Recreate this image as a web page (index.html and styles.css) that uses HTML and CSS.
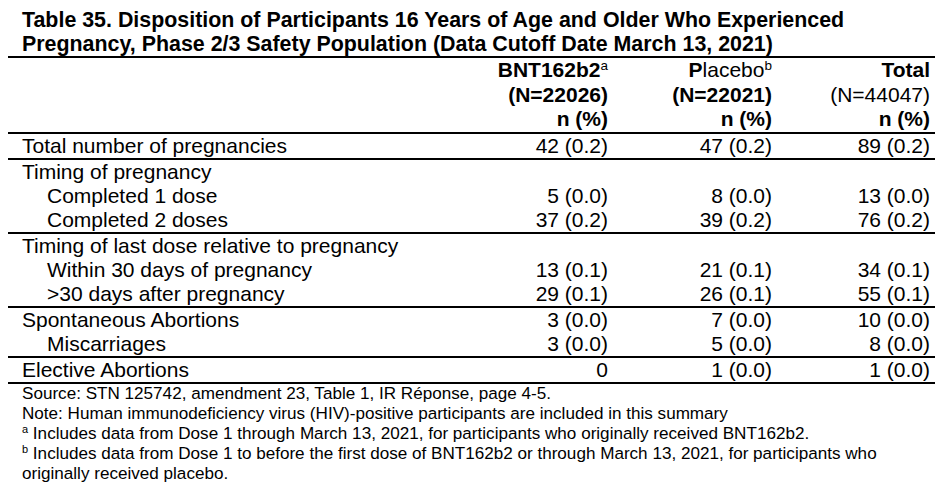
FILE: index.html
```html
<!DOCTYPE html>
<html lang="en">
<head>
<meta charset="utf-8">
<title>Table 35</title>
<link rel="stylesheet" href="styles.css">
</head>
<body>
<div class="page">
  <h1 class="title">Table 35. Disposition of Participants 16 Years of Age and Older Who Experienced Pregnancy, Phase 2/3 Safety Population (Data Cutoff Date March 13, 2021)</h1>
  <table class="disp">
    <colgroup>
      <col class="c-label">
      <col class="c-a">
      <col class="c-b">
      <col class="c-c">
    </colgroup>
    <thead>
      <tr>
        <th class="lab"></th>
        <th class="num">BNT162b2<sup class="hsup">a</sup><br>(N=22026)<br>n (%)</th>
        <th class="num">P<span class="reg">lacebo</span><sup class="hsup">b</sup><br>(N=22021)<br>n (%)</th>
        <th class="num">Total<br><span class="reg">(N=44047)</span><br>n (%)</th>
      </tr>
    </thead>
    <tbody>
      <tr><td class="lab">Total number of pregnancies</td><td class="num">42 (0.2)</td><td class="num">47 (0.2)</td><td class="num">89 (0.2)</td></tr>
    </tbody>
    <tbody>
      <tr><td class="lab">Timing of pregnancy</td><td class="num"></td><td class="num"></td><td class="num"></td></tr>
      <tr><td class="lab ind">Completed 1 dose</td><td class="num">5 (0.0)</td><td class="num">8 (0.0)</td><td class="num">13 (0.0)</td></tr>
      <tr><td class="lab ind">Completed 2 doses</td><td class="num">37 (0.2)</td><td class="num">39 (0.2)</td><td class="num">76 (0.2)</td></tr>
    </tbody>
    <tbody>
      <tr><td class="lab">Timing of last dose relative to pregnancy</td><td class="num"></td><td class="num"></td><td class="num"></td></tr>
      <tr><td class="lab ind">Within 30 days of pregnancy</td><td class="num">13 (0.1)</td><td class="num">21 (0.1)</td><td class="num">34 (0.1)</td></tr>
      <tr><td class="lab ind">&gt;30 days after pregnancy</td><td class="num">29 (0.1)</td><td class="num">26 (0.1)</td><td class="num">55 (0.1)</td></tr>
    </tbody>
    <tbody>
      <tr><td class="lab">Spontaneous Abortions</td><td class="num">3 (0.0)</td><td class="num">7 (0.0)</td><td class="num">10 (0.0)</td></tr>
      <tr><td class="lab ind">Miscarriages</td><td class="num">3 (0.0)</td><td class="num">5 (0.0)</td><td class="num">8 (0.0)</td></tr>
    </tbody>
    <tbody>
      <tr><td class="lab">Elective Abortions</td><td class="num">0</td><td class="num">1 (0.0)</td><td class="num">1 (0.0)</td></tr>
    </tbody>
  </table>
  <div class="notes">
    <p>Source: STN 125742, amendment 23, Table 1, IR Réponse, page 4-5.</p>
    <p>Note: Human immunodeficiency virus (HIV)-positive participants are included in this summary</p>
    <p><sup class="fsup">a</sup> Includes data from Dose 1 through March 13, 2021, for participants who originally received BNT162b2.</p>
    <p><sup class="fsup">b</sup> Includes data from Dose 1 to before the first dose of BNT162b2 or through March 13, 2021, for participants who<br>originally received placebo.</p>
  </div>
</div>
</body>
</html>
```

FILE: styles.css
```css
html, body {
  background: #ffffff;
}

body {
  margin: 8px;
  color: #000000;
  font-family: "Liberation Sans", Arial, sans-serif;
}

.page {
  width: 927px;
}

.title {
  margin: 0;
  padding-left: 14px;
  font-size: 21.4px;
  font-weight: bold;
  line-height: 24px;
}

.disp {
  width: 927px;
  border-collapse: collapse;
  table-layout: fixed;
  font-size: 21px;
  line-height: 24px;
  border-bottom: 2px solid #000;
}

.c-label { width: 447px; }
.c-a { width: 158px; }
.c-b { width: 164px; }
.c-c { width: 158px; }

.disp thead {
  border-top: 2px solid #000;
}

.disp tbody {
  border-top: 2px solid #000;
}

.disp th,
.disp td {
  padding: 0;
  white-space: nowrap;
  vertical-align: top;
}

.disp th {
  font-weight: bold;
  line-height: 24.5px;
}

.lab {
  text-align: left;
  padding-left: 14px !important;
}

.ind {
  padding-left: 39px !important;
}

.num {
  text-align: right;
  padding-right: 5px !important;
}

.reg {
  font-weight: normal;
}

.hsup {
  font-size: 13.5px;
  font-weight: normal;
  line-height: 0;
  vertical-align: 7px;
}

.notes {
  padding-left: 14px;
  font-size: 17.1px;
  line-height: 20px;
}

.notes p {
  margin: 0;
}

.fsup {
  font-size: 11px;
  line-height: 0;
  vertical-align: 6px;
}
```
